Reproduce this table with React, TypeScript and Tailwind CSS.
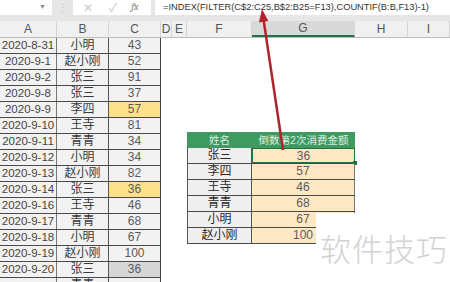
import React from 'react'

const rows: { date: string; name: string; amt: string; hl?: 'yellow' | 'gray' }[] = [
    { date: '2020-8-31', name: '小明', amt: '43' },
    { date: '2020-9-1', name: '赵小刚', amt: '52' },
    { date: '2020-9-2', name: '张三', amt: '91' },
    { date: '2020-9-8', name: '张三', amt: '37' },
    { date: '2020-9-9', name: '李四', amt: '57', hl: 'yellow' },
    { date: '2020-9-10', name: '王寺', amt: '81' },
    { date: '2020-9-11', name: '青青', amt: '34' },
    { date: '2020-9-12', name: '小明', amt: '34' },
    { date: '2020-9-13', name: '赵小刚', amt: '82' },
    { date: '2020-9-14', name: '张三', amt: '36', hl: 'yellow' },
    { date: '2020-9-16', name: '王寺', amt: '46' },
    { date: '2020-9-17', name: '青青', amt: '68' },
    { date: '2020-9-18', name: '小明', amt: '67' },
    { date: '2020-9-19', name: '赵小刚', amt: '100' },
    { date: '2020-9-20', name: '张三', amt: '36', hl: 'gray' },
    { date: '', name: '青青', amt: '' },
]

const result = [
    { name: '张三', amt: '36' },
    { name: '李四', amt: '57' },
    { name: '王寺', amt: '46' },
    { name: '青青', amt: '68' },
    { name: '小明', amt: '67' },
    { name: '赵小刚', amt: '100' },
]

const cols = [
    { label: 'A', w: 'w-[57px]' },
    { label: 'B', w: 'w-[52px]' },
    { label: 'C', w: 'w-[52px]' },
    { label: 'D', w: 'w-[11px]' },
    { label: 'E', w: 'w-[15px]' },
    { label: 'F', w: 'w-[65px]' },
    { label: 'G', w: 'w-[103px]' },
    { label: 'H', w: 'w-[53px]' },
    { label: 'I', w: 'flex-1' },
]

const font = { fontFamily: '"Liberation Sans", "Noto Sans CJK SC", sans-serif' }

export default function App() {
    return (
        <div className="relative w-[450px] h-[282px] overflow-hidden bg-white flex flex-col" style={font}>
            {/* formula bar */}
            <div className="h-[15px] flex bg-[#e6e6e6] shrink-0">
                <div className="w-[52px] bg-white flex items-center justify-end pr-[6px] text-[7px] text-[#888]">▼</div>
                <div className="w-[21px] flex items-center justify-center text-[10px] text-[#c4c4c4]">⋮</div>
                <div className="w-[78px] bg-white flex items-center text-[#c8c8c8]">
                    <span className="ml-[10px] text-[12px] leading-none">✕</span>
                    <span className="ml-[16px] text-[12px] leading-none">✓</span>
                    <span className="ml-[14px] text-[10px] italic font-serif text-[#777]">fx</span>
                </div>
                <div className="flex-1 ml-[4px] bg-white flex items-center pl-[8px] text-[9.3px] text-[#333] whitespace-nowrap">
                    =INDEX(FILTER(C$2:C25,B$2:B25=F13),COUNTIF(B:B,F13)-1)
                </div>
            </div>
            <div className="h-[6px] bg-[#e6e6e6] shrink-0" />

            {/* column headers */}
            <div className="h-[17px] flex bg-[#f0f0f0] border-b border-[#bdbdbd] shrink-0">
                {cols.map(c => (
                    <div
                        key={c.label}
                        className={`${c.w} flex items-center justify-center text-[12px] text-[#555] border-r border-[#d4d4d4] ${c.label === 'G' ? 'bg-[#d9d9d9] border-b-2 border-b-[#217346]' : ''}`}
                    >
                        {c.label}
                    </div>
                ))}
            </div>

            {/* sheet body */}
            <div className="flex flex-1 min-h-0">
                <div className="w-[161px] shrink-0 border-r border-[#444]">
                    {rows.map((r, i) => (
                        <div key={i} className="flex h-[16px] border-b border-[#4a4a4a] text-[12px] leading-[15px]">
                            <div className="w-[57px] bg-[#f2f2f2] text-center text-[11.5px] text-[#444] border-r border-[#777]">{r.date}</div>
                            <div className="w-[52px] bg-[#f2f2f2] text-center text-[#3a3a3a] border-r border-[#555]">{r.name}</div>
                            <div
                                className={`flex-1 text-center text-[#5a5a5a] ${r.hl === 'yellow' ? 'bg-[#ffe08a]' : r.hl === 'gray' ? 'bg-[#d6d6d6]' : 'bg-[#f2f2f2]'}`}
                            >
                                {r.amt}
                            </div>
                        </div>
                    ))}
                </div>

                <div className="flex-1">
                    <div className="mt-[94px] ml-[26px] w-[168px] text-[12px] leading-[15px]">
                        <div className="flex h-[16px] bg-[#3f9a62] text-[#d9efe1] text-[10.5px] leading-[16px]">
                            <div className="w-[65px] text-center">姓名</div>
                            <div className="flex-1 text-center">倒数第2次消费金额</div>
                        </div>
                        {result.map((r, i) => (
                            <div key={i} className="flex h-[16px] border-b border-[#4a4a4a]">
                                <div className="w-[65px] bg-[#efefef] text-center text-[#2a2a2a] border-l border-r border-[#555]">{r.name}</div>
                                <div className={`relative flex-1 bg-[#fde8c4] text-center text-[#5a5a5a] ${i === 0 ? 'border border-[#217346]' : 'border-r border-[#777]'}`}>
                                    {r.amt}
                                    {i === 0 && <span className="absolute -right-[3px] -bottom-[3px] w-[4px] h-[4px] bg-[#217346]" />}
                                </div>
                            </div>
                        ))}
                    </div>
                </div>
            </div>

            {/* red arrow */}
            <svg className="absolute inset-0 pointer-events-none" width="450" height="282" viewBox="0 0 450 282">
                <line x1="283" y1="150" x2="263.6" y2="20" stroke="#b0232a" strokeWidth="2.5" />
                <polygon points="262,9 268.3,21 258.9,22.4" fill="#b0232a" />
            </svg>

            {/* watermark */}
            <div className="absolute left-[316px] top-[213px] right-0 bottom-0 bg-white pt-[19px] pl-[4px]">
                <span className="text-[31px] leading-[31px] text-[#d2d2d2] tracking-[1px]" style={{ fontFamily: '"Noto Sans CJK SC", sans-serif', fontWeight: 300 }}>
                    软件技巧
                </span>
            </div>
        </div>
    )
}
